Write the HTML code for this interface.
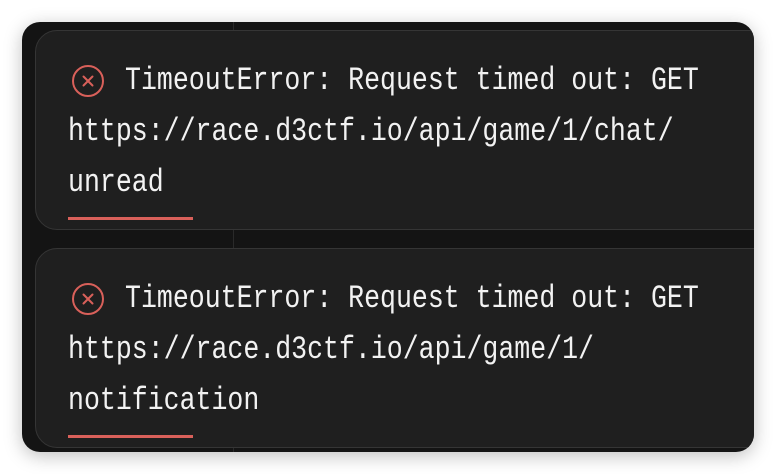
<!DOCTYPE html>
<html><head><style>
html,body{margin:0;padding:0;background:#fff;width:776px;height:474px;overflow:hidden}
.outer{position:absolute;left:22px;top:22px;width:732px;height:430px;background:#141414;border-radius:18px;box-shadow:0 4px 18px rgba(0,0,0,.25);overflow:hidden}
.vline{position:absolute;left:211px;top:0;width:1px;height:430px;background:#2a2a2a}
.card{position:absolute;left:13px;width:740px;height:198px;background:#1f1f1f;border:1px solid #353535;border-radius:22px}
.txt{position:absolute;font-family:"Liberation Mono",monospace;font-size:32px;line-height:51px;color:#f2f2f2;white-space:pre;transform:scaleX(0.83);transform-origin:0 0}
.bar{position:absolute;left:32px;width:125px;height:3px;background:#d9605a}
svg{position:absolute;left:35px;top:33px}
</style></head><body>
<div class="outer">
<div class="vline"></div>
<div class="card" style="top:8px">
<svg width="34" height="34" viewBox="0 0 34 34"><circle cx="17" cy="17" r="15" fill="none" stroke="#d9605a" stroke-width="2"/><path d="M12.5 12.5L21.5 21.5M21.5 12.5L12.5 21.5" stroke="#d9605a" stroke-width="2" stroke-linecap="round"/></svg>
<div class="txt" style="left:89px;top:24px">TimeoutError: Request timed out: GET</div>
<div class="txt" style="left:32px;top:75px">https://race.d3ctf.io/api/game/1/chat/
unread</div>
<div class="bar" style="top:186px"></div>
</div>
<div class="card" style="top:226px">
<svg width="34" height="34" viewBox="0 0 34 34"><circle cx="17" cy="17" r="15" fill="none" stroke="#d9605a" stroke-width="2"/><path d="M12.5 12.5L21.5 21.5M21.5 12.5L12.5 21.5" stroke="#d9605a" stroke-width="2" stroke-linecap="round"/></svg>
<div class="txt" style="left:89px;top:24px">TimeoutError: Request timed out: GET</div>
<div class="txt" style="left:32px;top:75px">https://race.d3ctf.io/api/game/1/
notification</div>
<div class="bar" style="top:186px"></div>
</div>
</div>
</body></html>
